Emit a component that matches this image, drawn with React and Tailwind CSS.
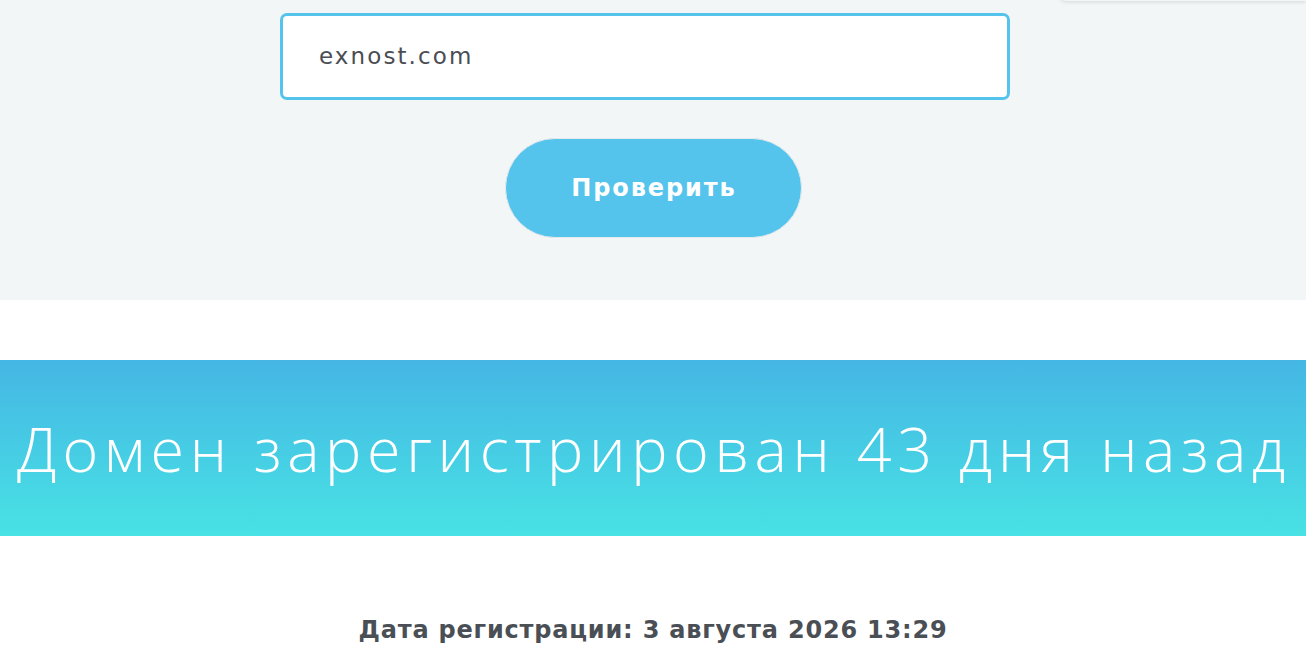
export default function App() {
  return (
    <div className="relative min-h-screen overflow-hidden bg-white font-['Open_Sans',sans-serif]">
      {/* tail of a dropdown panel sitting above the viewport */}
      <div className="absolute right-0 top-[-40px] h-[41px] w-[246px] rounded-bl-md bg-[#f2f6f7] shadow-[0_1px_4px_rgba(0,0,0,0.12)]" />

      <section className="h-[300px] bg-[#f2f6f7] pt-[13px]">
        <div className="mx-auto w-[746px]">
          <div className="flex h-[87px] w-[730px] items-center rounded-[7px] border-[3px] border-[#55c4ec] bg-white pl-[36px]">
            <span className="font-['DejaVu_Sans',sans-serif] text-[23px] tracking-[2.1px] text-[#4a4d52]">
              exnost.com
            </span>
          </div>
        </div>
        <div className="mt-[38px] flex justify-center">
          <button className="h-[100px] w-[297px] rounded-full border border-[#e6e9ea] bg-[#55c4ec] pl-[2px] font-['DejaVu_Sans',sans-serif] text-[24px] font-bold tracking-[1.9px] text-white">
            Проверить
          </button>
        </div>
      </section>

      <div className="h-[60px]" />

      <section className="flex h-[176px] items-center justify-center bg-gradient-to-b from-[#45b6e4] to-[#48e2e4]">
        <h1 className="whitespace-nowrap pl-[2px] text-[61px] font-light leading-none tracking-[5.6px] text-white">
          Домен зарегистрирован 43 дня назад
        </h1>
      </section>

      <div className="pt-[76px] text-center">
        <p className="font-['DejaVu_Sans',sans-serif] text-[24px] font-bold tracking-[0.8px] text-[#4a4f55]">
          Дата регистрации: 3 августа 2026 13:29
        </p>
      </div>
    </div>
  );
}
